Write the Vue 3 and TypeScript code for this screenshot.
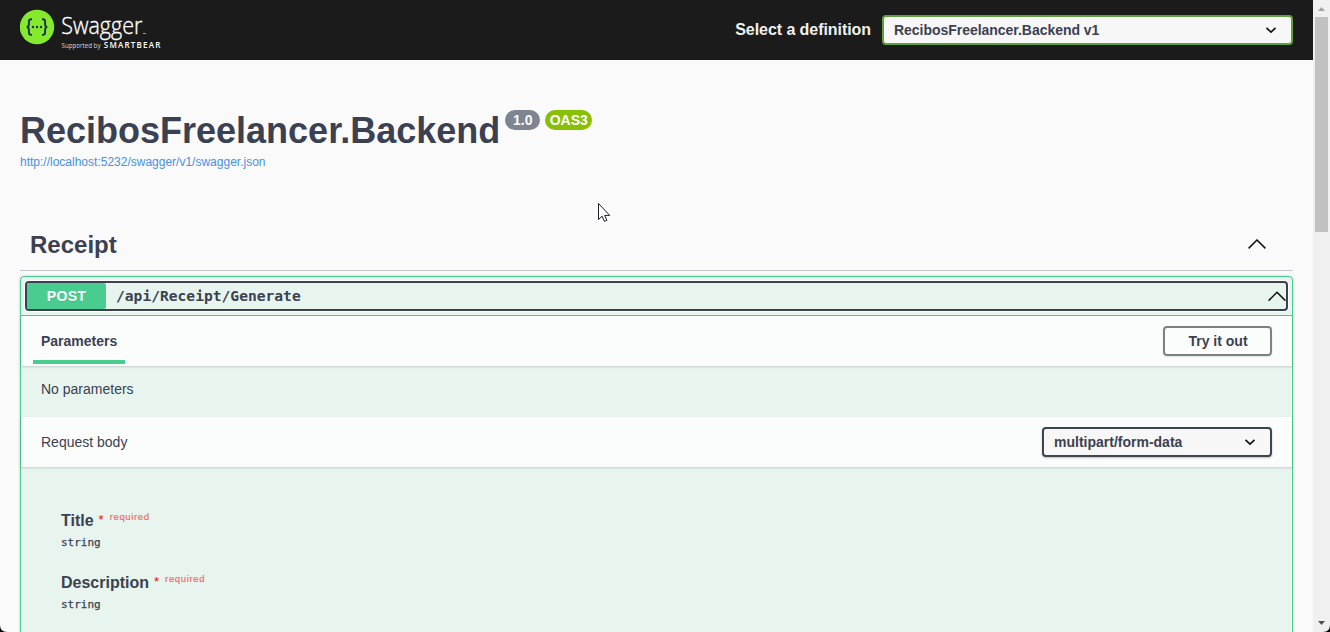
<script setup lang="ts">
interface Field {
  name: string
  type: string
}

const fields: Field[] = [
  { name: 'Title', type: 'string' },
  { name: 'Description', type: 'string' },
]
</script>

<template>
  <div class="window">
    <main class="page">
      <header class="topbar">
        <svg class="logo" width="150" height="50" viewBox="0 0 150 50">
          <circle cx="17" cy="22" r="17.2" fill="#85ea2d" />
          <g fill="none" stroke="#173647" stroke-width="1.9">
            <path d="M12 14.300h-.8c-1.900 0-2.300.9-2.300 2.400v2.500c0 1.800-.7 2.500-2 2.800 1.300.3 2 1 2 2.800v2.500c0 1.500.4 2.600 2.300 2.600h.8" />
            <path d="M22 14.300h.8c1.900 0 2.300.9 2.300 2.400v2.500c0 1.800.7 2.500 2 2.800-1.300.3-2 1-2 2.800v2.500c0 1.500-.4 2.600-2.300 2.600H22" />
          </g>
          <g fill="#173647">
            <circle cx="13" cy="22" r="1.2" />
            <circle cx="17" cy="22" r="1.2" />
            <circle cx="21" cy="22" r="1.2" />
          </g>
          <text class="logo-name" x="41.3" y="29.2" textLength="81" lengthAdjust="spacingAndGlyphs">Swagger</text>
          <path d="M123 28.500h3" stroke="#999" stroke-width="1" />
          <text class="logo-by" x="41.500" y="43" textLength="39" lengthAdjust="spacingAndGlyphs">Supported by</text>
          <text class="logo-brand" x="83.800" y="43.200" textLength="56.500" lengthAdjust="spacing">SMARTBEAR</text>
        </svg>
        <div class="definition">
          <span class="definition-label">Select a definition</span>
          <div class="select select-definition">
            <span>RecibosFreelancer.Backend v1</span>
            <svg width="12" height="8" viewBox="0 0 12 8"><path d="M1.500 1.800 6 6l4.500-4.200" /></svg>
          </div>
        </div>
      </header>

      <section class="info">
        <div class="title-row">
          <h1>RecibosFreelancer.Backend</h1>
          <span class="badge version">1.0</span>
          <span class="badge oas">OAS3</span>
        </div>
        <a class="spec-link">http://localhost:5232/swagger/v1/swagger.json</a>
      </section>

      <section class="tag">
        <h2>Receipt</h2>
        <svg class="arrow" width="20" height="12" viewBox="0 0 20 12"><path d="M1.600 9.400 10 1l8.400 8.400" /></svg>
      </section>

      <section class="opblock">
        <div class="summary">
          <div class="summary-control">
            <span class="method">POST</span>
            <span class="path">/api/Receipt/Generate</span>
            <svg class="arrow" width="19" height="12" viewBox="0 0 19 12"><path d="M1.600 10.600 10 2.200l8.400 8.400" /></svg>
          </div>
        </div>
        <div class="section-header">
          <div class="tab">Parameters</div>
          <button class="try" type="button">Try it out</button>
        </div>
        <p class="empty">No parameters</p>
        <div class="section-header body-header">
          <span class="body-label">Request body</span>
          <div class="select select-media">
            <span>multipart/form-data</span>
            <svg width="12" height="8" viewBox="0 0 12 8"><path d="M1.500 1.800 6 6l4.500-4.200" /></svg>
          </div>
        </div>
        <div class="fields">
          <div v-for="field in fields" :key="field.name" class="field">
            <div class="field-name">
              <span>{{ field.name }}</span>
              <span class="star">*</span>
              <span class="required">required</span>
            </div>
            <div class="field-type">{{ field.type }}</div>
          </div>
        </div>
      </section>
    </main>

    <aside class="scrollbar">
      <svg width="17" height="17" viewBox="0 0 17 17"><path d="M5 11h7L8.500 7z" fill="#a3a3a3" /></svg>
      <div class="thumb"></div>
      <svg class="down" width="17" height="17" viewBox="0 0 17 17"><path d="M5 6h7L8.500 10z" fill="#505050" /></svg>
    </aside>

    <svg class="pointer" width="14" height="21" viewBox="0 0 14 21">
      <path d="M1.500 1.500v16l3.600-3.300 2.300 5.200 2.500-1.100-2.200-4.900h5z" fill="#fff" stroke="#1b1b2b" stroke-width="1" />
    </svg>
    <svg class="corner left" width="7" height="7" viewBox="0 0 7 7"><path d="M0 0q0 7 7 7H0z" /></svg>
    <svg class="corner right" width="7" height="7" viewBox="0 0 7 7"><path d="M7 0q0 7-7 7h7z" /></svg>
  </div>
</template>

<style>
html,
body {
  overflow: hidden;
  background: #fafafa;
}
</style>

<style scoped>
* {
  box-sizing: border-box;
}

.window {
  position: relative;
  display: flex;
  width: 1330px;
  height: 632px;
  overflow: hidden;
  background: #fafafa;
  color: #3b4151;
  font-family: "Liberation Sans", Arial, sans-serif;
}

.page {
  width: 1313px;
  height: 632px;
  overflow: hidden;
}

.topbar {
  display: flex;
  justify-content: space-between;
  height: 60px;
  padding: 5px 20px 0;
  background: #1b1b1b;
}

.logo {
  display: block;
}

.logo-name {
  fill: #fff;
  stroke: #fff;
  stroke-width: 0.35px;
  font: 300 23.500px "Open Sans", sans-serif;
}

.logo-by {
  fill: #d8d8d8;
  font: 400 6.500px "Open Sans", sans-serif;
}

.logo-brand {
  fill: #fff;
  font: 600 8px "Open Sans", sans-serif;
}

.definition {
  display: flex;
  align-items: center;
  height: 50px;
}

.definition-label {
  margin-right: 11px;
  color: #f0f0f0;
  font-size: 16px;
  font-weight: 700;
  letter-spacing: -0.06px;
}

.select {
  display: flex;
  align-items: center;
  justify-content: space-between;
  height: 30px;
  padding: 0 14px 0 10px;
  border: 2px solid #41444e;
  border-radius: 4px;
  background: #f7f7f7;
  font-size: 14px;
  font-weight: 700;
}

.select path {
  fill: none;
  stroke: #111;
  stroke-width: 1.7;
}

.select-definition {
  width: 411px;
  border-color: #62a03f;
  letter-spacing: -0.03px;
}

.select-media {
  width: 230px;
  box-shadow: 0 1px 2px rgba(0, 0, 0, 0.25);
}

.info {
  height: 161px;
  padding: 50px 20px 0;
}

.title-row {
  display: flex;
  align-items: flex-start;
  height: 42px;
}

h1 {
  margin: 0 5px 0 0;
  font-size: 36px;
  line-height: 42px;
  white-space: nowrap;
}

.badge {
  height: 20px;
  border-radius: 10px;
  color: #fff;
  font-size: 14px;
  font-weight: 700;
  line-height: 21px;
  text-align: center;
}

.version {
  width: 35px;
  margin-right: 5px;
  background: #7d8492;
}

.oas {
  width: 47px;
  background: #89bf04;
}

.spec-link {
  display: block;
  color: #4990e2;
  font-size: 12px;
  line-height: 20px;
}

.tag {
  display: flex;
  align-items: center;
  justify-content: space-between;
  height: 50px;
  margin: 0 20px 5px;
  padding: 0 26px 2px 10px;
  border-bottom: 1px solid #c3c5c8;
}

h2 {
  margin: 0;
  font-size: 24px;
  line-height: 30px;
}

.arrow path {
  fill: none;
  stroke: #111;
  stroke-width: 1.5;
}

.opblock {
  height: 400px;
  margin: 0 20px;
  border: 1px solid #49cc90;
  border-radius: 4px;
  background: #e7f5ee;
  box-shadow: 0 0 3px rgba(0, 0, 0, 0.19);
}

.summary {
  height: 39px;
  padding: 4px;
  border-bottom: 1px solid #49cc90;
}

.summary-control {
  display: flex;
  align-items: center;
  height: 30px;
  border: 2px solid #3b4151;
  border-radius: 4px;
  box-shadow: 0 0 0 1px #fff;
}

.method {
  width: 79px;
  height: 26px;
  border-radius: 2px;
  background: #49cc90;
  color: #fff;
  font-size: 14px;
  font-weight: 700;
  letter-spacing: 0.3px;
  line-height: 26px;
  text-align: center;
  text-shadow: 0 1px 0 rgba(0, 0, 0, 0.1);
}

.path {
  flex: 1;
  padding-left: 10px;
  font: 700 14.620px/26px "DejaVu Sans Mono", monospace;
}

.section-header {
  display: flex;
  align-items: center;
  justify-content: space-between;
  height: 50px;
  padding: 0 20px 0 12px;
  background: #fbfdfc;
  box-shadow: 0 1px 2px rgba(0, 0, 0, 0.16);
}

.tab {
  align-self: flex-start;
  width: 92px;
  height: 48px;
  padding-left: 8px;
  border-bottom: 4px solid #49cc90;
  font-size: 14px;
  font-weight: 700;
  line-height: 50px;
}

.try {
  width: 109px;
  height: 30px;
  padding: 0 0 0 1px;
  border: 2px solid #808080;
  border-radius: 4px;
  background: transparent;
  box-shadow: 0 1px 2px rgba(0, 0, 0, 0.1);
  color: #3b4151;
  font: 700 14px "Liberation Sans", Arial, sans-serif;
}

.empty {
  height: 51px;
  margin: 0;
  padding: 15px 20px;
  font-size: 14px;
  line-height: 16px;
}

.body-header {
  padding-left: 20px;
}

.body-label {
  font-size: 14px;
}

.fields {
  padding: 43px 40px 0;
}

.field {
  height: 62px;
}

.field-name {
  display: flex;
  height: 24px;
  font-size: 16px;
  font-weight: 700;
  line-height: 22px;
}

.star {
  margin-left: 5px;
  color: #f00;
  font-size: 13px;
  font-weight: 400;
  line-height: 19px;
}

.required {
  margin-left: 6px;
  color: #f56a67;
  font-size: 9.500px;
  font-weight: 400;
  letter-spacing: 0.65px;
  line-height: 14px;
  -webkit-text-stroke: 0.2px #f56a67;
}

.field-type {
  font: 400 11px/18px "DejaVu Sans Mono", monospace;
  -webkit-text-stroke: 0.25px #3b4151;
}

.scrollbar {
  display: flex;
  flex-direction: column;
  align-items: center;
  width: 17px;
  height: 632px;
  background: #f0f0f0;
}

.thumb {
  width: 13px;
  height: 215px;
  background: #c1c1c1;
}

.down {
  margin-top: auto;
}

.pointer {
  position: absolute;
  left: 597px;
  top: 202px;
}

.corner {
  position: absolute;
  bottom: 0;
}

.left {
  left: 0;
}

.right {
  right: 0;
}
</style>
